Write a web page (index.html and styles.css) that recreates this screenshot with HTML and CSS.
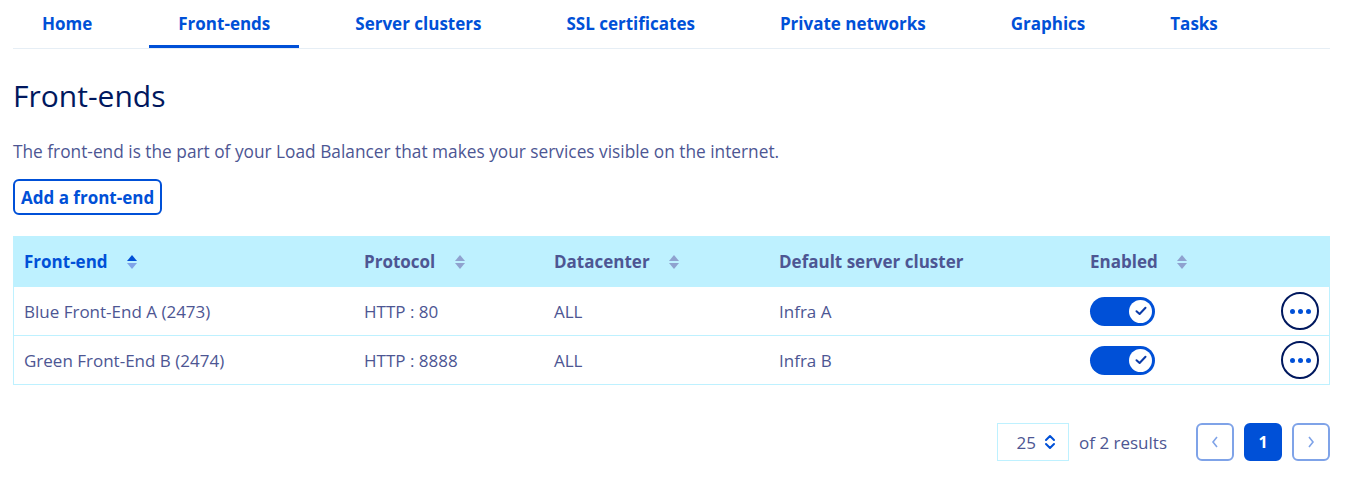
FILE: index.html
```html
<!DOCTYPE html>
<html lang="en">
<head>
  <meta charset="utf-8">
  <title>Front-ends</title>
  <link rel="stylesheet" href="styles.css">
</head>
<body class="body">
  <div class="page">
    <ul class="tabs">
      <li class="tab">Home</li>
      <li class="tab tab-active">Front-ends</li>
      <li class="tab">Server clusters</li>
      <li class="tab">SSL certificates</li>
      <li class="tab">Private networks</li>
      <li class="tab">Graphics</li>
      <li class="tab">Tasks</li>
    </ul>

    <h1 class="title">Front-ends</h1>
    <p class="intro">The front-end is the part of your Load Balancer that makes your services visible on the internet.</p>
    <button class="btn-outline">Add a front-end</button>

    <table class="grid">
      <thead>
        <tr>
          <th class="col-name sorted">Front-end <span class="sort sort-active"></span></th>
          <th class="col-proto">Protocol <span class="sort"></span></th>
          <th class="col-dc">Datacenter <span class="sort"></span></th>
          <th class="col-cluster">Default server cluster</th>
          <th class="col-enabled">Enabled <span class="sort"></span></th>
          <th class="col-actions"></th>
        </tr>
      </thead>
      <tbody>
        <tr>
          <td>Blue Front-End A (2473)</td>
          <td>HTTP : 80</td>
          <td>ALL</td>
          <td>Infra A</td>
          <td><span class="switch"><span class="knob"><svg width="14" height="14" viewBox="0 0 14 14"><path d="M2.5 7.2 L5.6 10 L11.5 3.8" fill="none" stroke="#0a3aa8" stroke-width="2" stroke-linecap="round" stroke-linejoin="round"/></svg></span></span></td>
          <td class="cell-actions"><button class="btn-more"><span></span><span></span><span></span></button></td>
        </tr>
        <tr>
          <td>Green Front-End B (2474)</td>
          <td>HTTP : 8888</td>
          <td>ALL</td>
          <td>Infra B</td>
          <td><span class="switch"><span class="knob"><svg width="14" height="14" viewBox="0 0 14 14"><path d="M2.5 7.2 L5.6 10 L11.5 3.8" fill="none" stroke="#0a3aa8" stroke-width="2" stroke-linecap="round" stroke-linejoin="round"/></svg></span></span></td>
          <td class="cell-actions"><button class="btn-more"><span></span><span></span><span></span></button></td>
        </tr>
      </tbody>
    </table>

    <div class="pager">
      <div class="page-size">
        25
        <svg width="12" height="18" viewBox="0 0 12 18"><path d="M2 7 L6 3 L10 7 M2 11 L6 15 L10 11" fill="none" stroke="#0050d7" stroke-width="2" stroke-linecap="round" stroke-linejoin="round"/></svg>
      </div>
      <span class="results">of 2 results</span>
      <div class="pages">
        <button class="page-btn"><svg width="10" height="14" viewBox="0 0 10 14"><path d="M7 2 L3 7 L7 12" fill="none" stroke="#7fa3e8" stroke-width="1.6"/></svg></button>
        <button class="page-btn page-current">1</button>
        <button class="page-btn"><svg width="10" height="14" viewBox="0 0 10 14"><path d="M3 2 L7 7 L3 12" fill="none" stroke="#7fa3e8" stroke-width="1.6"/></svg></button>
      </div>
    </div>
  </div>
</body>
</html>
```

FILE: styles.css
```css
.body {
  margin: 0;
  background-color: white;
  font-family: "Open Sans", "Lato", sans-serif;
  font-size: 17px;
  color: #4d5693;
}

.page {
  padding: 0 16px 0 13px;
}

/* onglets */
.tabs {
  display: flex;
  gap: 27px;
  list-style: none;
  margin: 0;
  padding: 0;
  border-bottom: 1px solid #e6eef5;
}

.tab {
  padding: 0 29px;
  height: 48px;
  line-height: 48px;
  font-size: 17px;
  font-weight: 700;
  color: #0050d7;
  box-sizing: border-box;
}

.tab:first-child {
  padding-right: 30px;
}

.tab-active {
  border-bottom: 3px solid #0050d7;
}

.title {
  margin: 27px 0 0;
  font-size: 30px;
  font-weight: 400;
  line-height: 40px;
  color: #00185e;
}

.intro {
  margin: 24px 0 0;
  font-size: 17.3px;
  line-height: 24px;
}

.btn-outline {
  margin-top: 15px;
  height: 36px;
  padding: 0 6px;
  font-family: inherit;
  font-size: 17px;
  font-weight: 700;
  color: #0050d7;
  background: white;
  border: 2px solid #0050d7;
  border-radius: 6px;
}

/* tableau */
.grid {
  margin-top: 21px;
  width: 100%;
  border-collapse: collapse;
  border: 1px solid #bef1ff;
  font-size: 17px;
}

.grid th {
  background-color: #bef1ff;
  height: 49px;
  padding: 0 10px;
  text-align: left;
  font-weight: 700;
  color: #4d5693;
  white-space: nowrap;
}

.grid th.sorted {
  color: #0050d7;
}

.grid td {
  height: 48px;
  padding: 0 10px;
  border-top: 1px solid #bef1ff;
}

.col-name { width: 320px; }
.col-proto { width: 170px; }
.col-dc { width: 205px; }
.col-cluster { width: 291px; }
.col-enabled { width: 160px; }

.sort {
  display: inline-block;
  position: relative;
  width: 10px;
  height: 14px;
  margin-left: 15px;
  vertical-align: -1px;
}

.sort::before,
.sort::after {
  content: "";
  position: absolute;
  left: 0;
  border-left: 5px solid transparent;
  border-right: 5px solid transparent;
}

.sort::before {
  top: 0;
  border-bottom: 6px solid #8fa2cf;
}

.sort::after {
  bottom: 0;
  border-top: 6px solid #8fa2cf;
}

.sort-active::before {
  border-bottom-color: #0050d7;
}

.sort-active::after {
  border-top-color: #7fa3e8;
}

.switch {
  display: flex;
  align-items: center;
  justify-content: flex-end;
  width: 65px;
  height: 29px;
  padding: 0 3px;
  box-sizing: border-box;
  border-radius: 15px;
  background-color: #0050d7;
}

.knob {
  display: flex;
  align-items: center;
  justify-content: center;
  width: 23px;
  height: 23px;
  border-radius: 50%;
  background: white;
}

.cell-actions {
  text-align: right;
}

.btn-more {
  display: inline-flex;
  align-items: center;
  justify-content: center;
  gap: 3px;
  width: 38px;
  height: 38px;
  padding: 0;
  border: 2px solid #00185e;
  border-radius: 50%;
  background: white;
}

.btn-more span {
  width: 5px;
  height: 5px;
  border-radius: 50%;
  background-color: #0050d7;
}

/* pagination */
.pager {
  display: flex;
  align-items: center;
  justify-content: flex-end;
  margin-top: 38px;
}

.page-size {
  display: flex;
  align-items: center;
  justify-content: flex-end;
  gap: 8px;
  width: 72px;
  height: 38px;
  padding-right: 12px;
  box-sizing: border-box;
  border: 1px solid #bef1ff;
  font-size: 17px;
}

.results {
  margin-left: 10px;
  font-size: 17px;
}

.pages {
  display: flex;
  gap: 10px;
  margin-left: 29px;
}

.page-btn {
  display: flex;
  align-items: center;
  justify-content: center;
  width: 38px;
  height: 38px;
  padding: 0;
  border: 2px solid #7fa3e8;
  border-radius: 6px;
  background: white;
  font-family: inherit;
  font-size: 16px;
  font-weight: 700;
}

.page-current {
  border-color: #0050d7;
  background-color: #0050d7;
  color: white;
}
```
